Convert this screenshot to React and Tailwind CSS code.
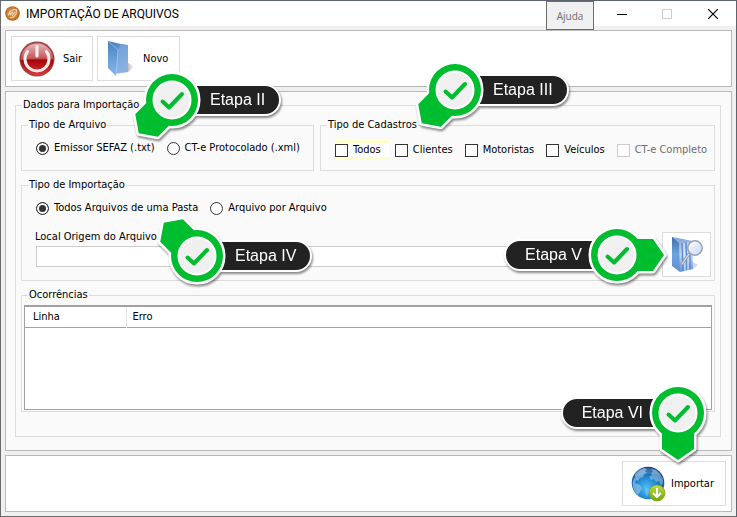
import { useState } from 'react';

const FILE_TYPES = [
  { id: 'txt', label: 'Emissor SEFAZ (.txt)' },
  { id: 'xml', label: 'CT-e Protocolado (.xml)' },
];

const IMPORT_MODES = [
  { id: 'folder', label: 'Todos Arquivos de uma Pasta' },
  { id: 'single', label: 'Arquivo por Arquivo' },
];

const RECORDS = [
  { id: 'clientes', label: 'Clientes' },
  { id: 'motoristas', label: 'Motoristas' },
  { id: 'veiculos', label: 'Veículos' },
  { id: 'cte', label: 'CT-e Completo', disabled: true },
];

const STEPS = [
  { label: 'Etapa II', angle: 45, place: 'left-[119px] top-[47px]' },
  { label: 'Etapa III', angle: 45, place: 'left-[402px] top-[37px]' },
  { label: 'Etapa IV', angle: 135, place: 'left-[144px] top-[203px]' },
  { label: 'Etapa V', angle: -90, place: 'right-[67px] top-[202px]', flip: true },
  { label: 'Etapa VI', angle: 0, place: 'right-[6px] bottom-[51px]', flip: true },
];

function AppIcon() {
  return (
    <svg viewBox="0 0 15 15" className="size-[15px] shrink-0">
      <circle cx="7.5" cy="7.5" r="7.3" fill="#b8681c" />
      <circle cx="7.5" cy="7" r="6" fill="#cf8234" />
      <path d="M3 9.5 5 5.5 9 3.5 11.5 4 11 8 8.5 11 5 12M5 9l3-3M7 10l3-4M4 8l2-1" fill="none" stroke="#f8dfc0" strokeWidth="1.1" />
    </svg>
  );
}

function PowerIcon() {
  return (
    <svg viewBox="0 0 36 36" className="size-9 shrink-0">
      <defs>
        <linearGradient id="pw-body" x1="0" y1="0" x2="0" y2="1">
          <stop offset="0" stopColor="#c4474b" />
          <stop offset=".5" stopColor="#b52a2c" />
          <stop offset=".54" stopColor="#a80508" />
          <stop offset="1" stopColor="#dd3a3c" />
        </linearGradient>
        <linearGradient id="pw-shine" x1="0" y1="0" x2="0" y2="1">
          <stop offset="0" stopColor="#fff" stopOpacity=".6" />
          <stop offset="1" stopColor="#fff" stopOpacity=".15" />
        </linearGradient>
      </defs>
      <circle cx="18" cy="18" r="17.5" fill="#8d4a4c" />
      <circle cx="18" cy="18" r="16.6" fill="url(#pw-body)" />
      <path d="M2 19a16 16 0 0 1 32-1q-16-1-32 1Z" fill="url(#pw-shine)" />
      <path d="M8.600 10.500A12 12 0 1 0 27.400 10.500" fill="none" stroke="#f3eeee" strokeWidth="3" strokeLinecap="round" />
      <path d="M18 5.500v9.500" stroke="#f3eeee" strokeWidth="3.200" strokeLinecap="round" />
    </svg>
  );
}

function FolderIcon() {
  return (
    <svg viewBox="0 0 32 36" className="h-9 w-8 shrink-0">
      <defs>
        <linearGradient id="fd-back" x1="0" y1="0" x2=".3" y2="1">
          <stop offset="0" stopColor="#3f78b8" />
          <stop offset=".5" stopColor="#6c9fd6" />
          <stop offset="1" stopColor="#a3c4ee" />
        </linearGradient>
        <linearGradient id="fd-front" x1="0" y1="0" x2="0" y2="1">
          <stop offset="0" stopColor="#4a82bd" />
          <stop offset=".6" stopColor="#6fa3dc" />
          <stop offset="1" stopColor="#86b4ea" />
        </linearGradient>
        <linearGradient id="fd-shade" x1="0" y1="0" x2="1" y2="0">
          <stop offset="0" stopColor="#b5b5b5" />
          <stop offset="1" stopColor="#fff" />
        </linearGradient>
      </defs>
      <path d="m20 21 7 5-6 5Z" fill="url(#fd-shade)" />
      <path d="m1 0 13 3 7 1v27l-12 1-8-5Z" fill="url(#fd-back)" />
      <path d="m14 3 7 1v27l-12 2 1-22Z" fill="#7eaadd" opacity=".7" />
      <path d="m1 0 10 9-2 26-8-8Z" fill="url(#fd-front)" />
      <path d="m1 0 10 9-2 26" fill="none" stroke="#b3d0f2" strokeWidth=".6" />
    </svg>
  );
}

function SearchFolderIcon() {
  return (
    <svg viewBox="0 0 32 36" className="h-9 w-8 shrink-0">
      <defs>
        <linearGradient id="sf-side" x1="0" y1="0" x2="0" y2="1">
          <stop offset="0" stopColor="#3d6fa8" />
          <stop offset=".5" stopColor="#6fa3dd" />
          <stop offset="1" stopColor="#5c90d0" />
        </linearGradient>
        <linearGradient id="sf-page" x1="0" y1="0" x2="0" y2="1">
          <stop offset="0" stopColor="#7fa3d8" />
          <stop offset=".5" stopColor="#c3d8f6" />
          <stop offset="1" stopColor="#5f92e0" />
        </linearGradient>
        <linearGradient id="sf-lens" x1="0" y1="0" x2="1" y2="1">
          <stop offset="0" stopColor="#fbfdff" />
          <stop offset="1" stopColor="#c4d8f4" />
        </linearGradient>
      </defs>
      <path d="m20 24 7 4-6 5Z" fill="#d8d8d8" />
      <path d="m1 0 11 2 9 2 1 28-13 3Z" fill="url(#sf-page)" />
      <path d="m11 6 1 28M15 5l1 28M19 5v27" fill="none" stroke="#5d8ad2" strokeWidth="1.300" />
      <path d="m13 6 1 28M17 5v28" fill="none" stroke="#dce9fb" strokeWidth="1" />
      <path d="m1 0 7 6 1 29-8-6Z" fill="url(#sf-side)" />
      <path d="m18 17-7 10" stroke="#8e98a8" strokeWidth="3" strokeLinecap="round" />
      <path d="m18 17-7 10" stroke="#d9dee6" strokeWidth="1.200" strokeLinecap="round" />
      <circle cx="24" cy="11" r="7.200" fill="url(#sf-lens)" stroke="#99a2b0" strokeWidth="1.500" />
      <path d="M19 10a5 5 0 0 1 5-4" fill="none" stroke="#fff" strokeWidth="1.500" />
    </svg>
  );
}

function GlobeIcon() {
  return (
    <svg viewBox="0 0 36 36" className="size-9 shrink-0">
      <defs>
        <radialGradient id="gl-sea" cx=".45" cy=".65" r=".65">
          <stop offset="0" stopColor="#4cc0fa" />
          <stop offset=".55" stopColor="#2080cc" />
          <stop offset="1" stopColor="#123f7a" />
        </radialGradient>
        <linearGradient id="gl-badge" x1="0" y1="0" x2="0" y2="1">
          <stop offset="0" stopColor="#c0dd3e" />
          <stop offset="1" stopColor="#6fa30c" />
        </linearGradient>
      </defs>
      <circle cx="17" cy="17" r="16.300" fill="url(#gl-sea)" />
      <path d="m4 8 4-4 5-2 3 1-2 2 2 2-3 1-1 3-3 1-2 3-2-1-1 3 2 1 3 1 2 3-2 4-2 3q-4-3-5-8-1-6 2-10Z" fill="#8fbfe2" opacity=".7" />
      <path d="m20 3 5 1 4 4 3 5v4l-2 3-2-5-3 1-2-3-3 1-2-3 3-2-1-2 2-1Z" fill="#8fc2e6" opacity=".6" />
      <path d="m14 22 4 1 1 3-3 5-2-4Z" fill="#9edaf8" opacity=".4" />
      <path d="M4 11Q10 1 18 2q8 0 12 7-12-4-26 2Z" fill="#fff" opacity=".15" />
      <circle cx="26" cy="27" r="8" fill="url(#gl-badge)" stroke="#7aa81c" strokeWidth=".8" />
      <path d="M26 22v9m-4-4 4 4 4-4" fill="none" stroke="#fff" strokeWidth="2" />
    </svg>
  );
}

function ToolButton({ icon, className = '', children, ...props }) {
  return (
    <button
      type="button"
      className={`flex h-[45px] items-center border border-[#dcdcdc] bg-white hover:bg-[#f5f9fd] ${className}`}
      {...props}
    >
      {icon}
      {children}
    </button>
  );
}

function Group({ title, className = '', children }) {
  return (
    <fieldset className={`min-w-0 border border-[#dcdcdc] px-[5px] ${className}`}>
      <legend className="ml-px px-px leading-[14px]">{title}</legend>
      {children}
    </fieldset>
  );
}

function RadioRow({ name, options, value, onChange }) {
  return (
    <div className="flex h-4 items-center gap-3 pl-[9px]">
      {options.map((option) => (
        <label key={option.id} className="flex items-center gap-[5px] whitespace-nowrap">
          <input
            type="radio"
            name={name}
            checked={value === option.id}
            onChange={() => onChange(option.id)}
            className="size-[13px] shrink-0 appearance-none rounded-full border border-[#333] bg-white checked:bg-[#333] checked:shadow-[inset_0_0_0_2px_#fff]"
          />
          {option.label}
        </label>
      ))}
    </div>
  );
}

function Check({ label, className = '', ...props }) {
  return (
    <label className={`flex items-center gap-[5px] whitespace-nowrap has-disabled:text-[#6d6d6d] ${className}`}>
      <input
        type="checkbox"
        className="size-[13px] shrink-0 appearance-none border border-[#333] bg-white checked:bg-[#333] checked:shadow-[inset_0_0_0_2px_#fff] disabled:border-[#ccc]"
        {...props}
      />
      {label}
    </label>
  );
}

function Step({ label, angle, place, flip }) {
  return (
    <div className={`pointer-events-none absolute size-[104px] drop-shadow-[1px_2px_1px_rgba(0,0,0,0.45)] ${place}`}>
      <span
        className={`absolute top-9 flex h-8 items-center border-2 border-white bg-[#222] font-['Liberation_Sans',Arial,sans-serif] text-base whitespace-nowrap text-white ${
          flip ? 'right-1/2 rounded-l-full pr-[33px] pl-[19px]' : 'left-1/2 rounded-r-full pr-[14px] pl-9'
        }`}
      >
        {label}
      </span>
      <svg viewBox="-52 -52 104 104" className="absolute inset-0 size-full">
        <g transform={`rotate(${angle})`} stroke="#fff" strokeWidth="5" strokeLinejoin="round">
          <circle r="26" />
          <path d="M-16 15V36L0 47 16 36V15Z" />
        </g>
        <g transform={`rotate(${angle})`} fill="#00bc2f">
          <circle r="26" />
          <path d="M-16 15V36L0 47 16 36V15Z" />
        </g>
        <circle r="18.500" fill="#f0f0f0" stroke="#fff" strokeWidth="2" />
        <path d="M-9.500 1.500-3 7.500 10-6" fill="none" stroke="#00bc2f" strokeWidth="4" strokeLinecap="round" strokeLinejoin="round" />
      </svg>
    </div>
  );
}

function TitleBar() {
  return (
    <header className="relative flex h-[25px] shrink-0 items-center bg-white pl-1">
      <AppIcon />
      <h1 className="pl-1.5 font-[Roboto,'Noto_Sans',sans-serif] text-xs">IMPORTAÇÃO DE ARQUIVOS</h1>
      <button
        type="button"
        className="absolute top-0 right-[142px] h-[29px] w-12 border border-[#6d6d6d] bg-[#f0f0f0] font-['Open_Sans','Noto_Sans',sans-serif] text-[10px] text-[#6d6d6d]"
      >
        Ajuda
      </button>
      <div className="ml-auto flex h-full">
        <button type="button" aria-label="Minimizar" className="grid w-[45px] place-items-center">
          <svg viewBox="0 0 10 10" className="size-[10px]" shapeRendering="crispEdges">
            <path d="M0 5.500h10" stroke="#000" />
          </svg>
        </button>
        <button type="button" aria-label="Maximizar" disabled className="grid w-[46px] place-items-center">
          <svg viewBox="0 0 10 10" className="size-[10px]" fill="none">
            <path d="M.5.500h9v9h-9Z" stroke="#ccc" />
          </svg>
        </button>
        <button type="button" aria-label="Fechar" className="grid w-[46px] place-items-center">
          <svg viewBox="0 0 10 10" className="size-[10px]">
            <path d="m0 0 10 10M10 0 0 10" stroke="#000" strokeWidth="1.200" />
          </svg>
        </button>
      </div>
    </header>
  );
}

export default function App() {
  const [fileType, setFileType] = useState('txt');
  const [mode, setMode] = useState('folder');

  return (
    <div className="relative flex min-h-screen flex-col border border-t-[#5c6470] border-r-[#5c6470] border-b-[#6b6b6b] border-l-[#6b6b6b] bg-[#f0f0f0] font-['DejaVu_Sans_Condensed','DejaVu_Sans',sans-serif] text-[11px] leading-[14px] text-black">
      <TitleBar />

      <div className="flex flex-1 flex-col gap-1 p-1">
        {/* Toolbar */}
        <div className="flex gap-1 border border-[#b9b9b9] bg-white p-[5px]">
          <ToolButton icon={<PowerIcon />} className="w-[82px] gap-2 pl-[7px]">Sair</ToolButton>
          <ToolButton icon={<FolderIcon />} className="w-[83px] gap-1 pl-[9px]">Novo</ToolButton>
        </div>

        <main className="flex-1 border border-[#b9b9b9] bg-[#fafafa] pt-1.5 pr-2.5 pb-3 pl-[9px]">
          <Group title="Dados para Importação" className="flex flex-col gap-[7px] pb-6">
            <div className="grid grid-cols-[293fr_395fr] gap-1.5 pt-1.5">
              <Group title="Tipo de Arquivo" className="pt-2 pb-[14px]">
                <RadioRow name="file-type" options={FILE_TYPES} value={fileType} onChange={setFileType} />
              </Group>
              <Group title="Tipo de Cadastros" className="pt-2 pb-2.5">
                <div className="flex items-center gap-3 pl-[9px]">
                  <Check label="Todos" className="-mr-1.5 border-y-[3px] border-[#ffffcc] bg-white pr-2" />
                  {RECORDS.map(({ id, ...record }) => (
                    <Check key={id} {...record} />
                  ))}
                </div>
              </Group>
            </div>

            <Group title="Tipo de Importação" className="pt-2 pb-[3px]">
              <RadioRow name="import-mode" options={IMPORT_MODES} value={mode} onChange={setMode} />
              <div className="-mr-0.5 flex items-end gap-2 pt-3.5 pl-2">
                <div className="flex flex-1 flex-col gap-0.5 pb-2.5">
                  <label htmlFor="source-path">Local Origem do Arquivo</label>
                  <input id="source-path" type="text" className="ml-px h-[21px] border border-[#ccc] bg-white px-1" />
                </div>
                <ToolButton icon={<SearchFolderIcon />} aria-label="Procurar" className="w-[49px] justify-center" />
              </div>
            </Group>

            <Group title="Ocorrências" className="pt-[3px] pb-px">
              <div className="-mx-[3px] min-h-[105px] border border-t-2 border-[#a0a0a5] bg-white">
                <table className="w-full table-fixed border-collapse text-left">
                  <thead>
                    <tr className="h-5 border-b border-[#a0a0a5]">
                      <th className="w-[101px] border-r border-[#e5e5e5] pl-2 font-normal">Linha</th>
                      <th className="pl-1.5 font-normal">Erro</th>
                    </tr>
                  </thead>
                  <tbody />
                </table>
              </div>
            </Group>
          </Group>
        </main>

        <footer className="flex justify-end border border-[#b9b9b9] bg-white p-[5px]">
          <ToolButton icon={<GlobeIcon />} className="w-[104px] gap-1 pl-2">Importar</ToolButton>
        </footer>
      </div>

      {/* Step markers */}
      {STEPS.map((step) => (
        <Step key={step.label} {...step} />
      ))}
    </div>
  );
}
